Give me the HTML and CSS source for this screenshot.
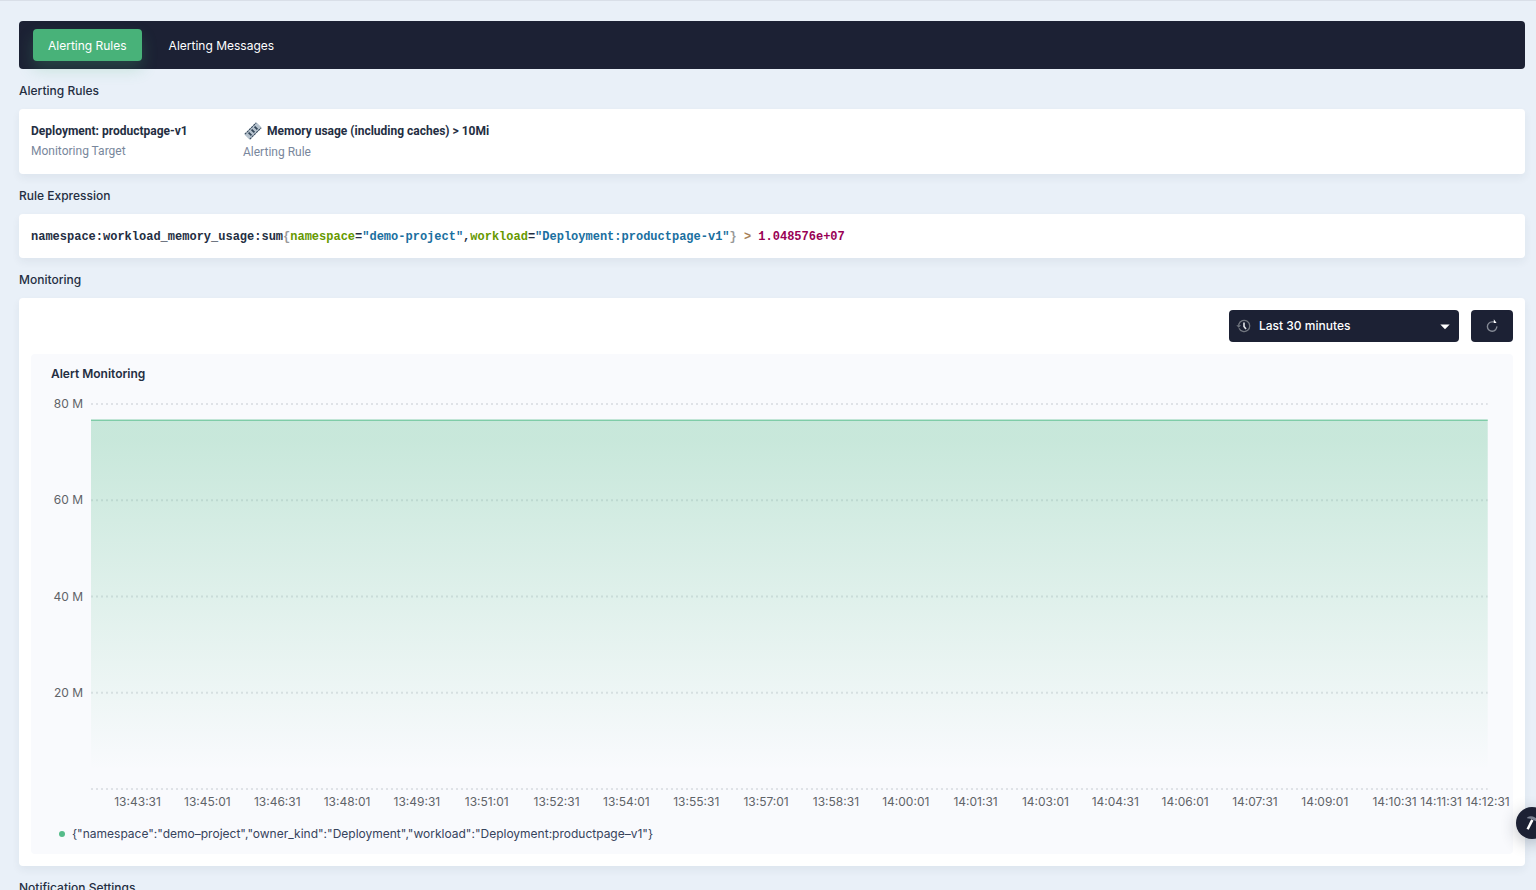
FILE: index.html
```html
<!DOCTYPE html>
<html lang="en">
<head>
<meta charset="utf-8">
<title>Alerting Rules</title>
<link rel="stylesheet" href="styles.css">
</head>
<body>
<main class="page">
  <nav class="tabs" aria-label="Alerting">
    <button class="tab tab-active" type="button">Alerting Rules</button>
    <button class="tab" type="button">Alerting Messages</button>
  </nav>

  <h2 class="section-title">Alerting Rules</h2>
  <section class="card rule-card">
    <div class="rule-item">
      <strong class="rule-value">Deployment: productpage-v1</strong>
      <span class="rule-label">Monitoring Target</span>
    </div>
    <div class="rule-item">
      <strong class="rule-value rule-metric">
        <svg class="metric-icon" width="20" height="20" viewBox="0 0 20 20" aria-hidden="true">
          <g transform="rotate(-45 10 10)">
            <rect x="1.5" y="6" width="17" height="8" rx="1" fill="#b6c2cd"/>
            <path d="M2 6.5h16M2 13.5h16" stroke="#324558" stroke-width="1" stroke-dasharray="2.2 .8"/>
            <path d="M5.8 8v4M10 8v4M14.2 8v4" stroke="#324558" stroke-width="1.8"/>
          </g>
        </svg>
        <span>Memory usage (including caches) &gt; 10Mi</span>
      </strong>
      <span class="rule-label">Alerting Rule</span>
    </div>
  </section>

  <h2 class="section-title">Rule Expression</h2>
  <section class="card">
    <pre class="expression"><code>namespace:workload_memory_usage:sum<span class="tok-brace">{</span><span class="tok-label">namespace</span>=<span class="tok-string">"demo-project"</span>,<span class="tok-label">workload</span>=<span class="tok-string">"Deployment:productpage-v1"</span><span class="tok-brace">}</span> <span class="tok-operator">&gt;</span> <span class="tok-number">1.048576e+07</span></code></pre>
  </section>

  <h2 class="section-title">Monitoring</h2>
  <section class="card">
    <div class="toolbar">
      <div class="range">
        <svg class="range-clock" width="16" height="16" viewBox="0 0 16 16" fill="none" aria-hidden="true">
          <path d="M3 10.2A5.6 5.6 0 1 0 2.8 6.2V7.6" stroke="#71767f" stroke-width="1.3"/>
          <path d="M.3 7.2h4.8L2.7 9.8z" fill="#71767f"/>
          <path d="M8 4.6v3.8l2 2.6" stroke="#e3e5e9" stroke-width="1.6"/>
        </svg>
        <select class="range-select" aria-label="Time range">
          <option>Last 30 minutes</option>
          <option>Last 1 hour</option>
        </select>
        <svg class="range-caret" width="10" height="6" viewBox="0 0 10 6" aria-hidden="true"><path d="M.3.4h9.4L5 5.3z" fill="#fff"/></svg>
      </div>
      <button class="refresh" type="button" aria-label="Refresh">
        <svg width="16" height="16" viewBox="0 0 16 16" fill="none" aria-hidden="true">
          <path d="M10.6 3.9H8A4.7 4.7 0 1 0 12.8 8.4" stroke="#858a95" stroke-width="1.4"/>
          <path d="M9.8 1.2l2.8 3.7H9.8z" fill="#fff"/>
        </svg>
      </button>
    </div>

    <div class="panel">
      <h3 class="panel-title">Alert Monitoring</h3>
      <div class="chart">
        <div class="y-axis"><span>80 M</span><span>60 M</span><span>40 M</span><span>20 M</span></div>
        <div class="canvas">
          <svg class="plot" aria-label="Memory usage over the last 30 minutes" role="img">
            <defs>
              <linearGradient id="area-fill" x1="0" y1="0" x2="0" y2="1">
                <stop offset="5%" stop-color="#55bc8a" stop-opacity=".3"/>
                <stop offset="95%" stop-color="#55bc8a" stop-opacity="0"/>
              </linearGradient>
            </defs>
            <g class="grid-lines">
              <line x1="0" x2="100%" y1="0" y2="0"/>
              <line x1="0" x2="100%" y1="25%" y2="25%"/>
              <line x1="0" x2="100%" y1="50%" y2="50%"/>
              <line x1="0" x2="100%" y1="75%" y2="75%"/>
              <line x1="0" x2="100%" y1="100%" y2="100%"/>
            </g>
            <rect x="0" y="4.2%" width="100%" height="95.8%" fill="url(#area-fill)"/>
            <line class="series-line" x1="0" x2="100%" y1="4.2%" y2="4.2%"/>
          </svg>
          <div class="x-axis">
            <span style="grid-column:2/4">13:43:31</span>
            <span style="grid-column:5/7">13:45:01</span>
            <span style="grid-column:8/10">13:46:31</span>
            <span style="grid-column:11/13">13:48:01</span>
            <span style="grid-column:14/16">13:49:31</span>
            <span style="grid-column:17/19">13:51:01</span>
            <span style="grid-column:20/22">13:52:31</span>
            <span style="grid-column:23/25">13:54:01</span>
            <span style="grid-column:26/28">13:55:31</span>
            <span style="grid-column:29/31">13:57:01</span>
            <span style="grid-column:32/34">13:58:31</span>
            <span style="grid-column:35/37">14:00:01</span>
            <span style="grid-column:38/40">14:01:31</span>
            <span style="grid-column:41/43">14:03:01</span>
            <span style="grid-column:44/46">14:04:31</span>
            <span style="grid-column:47/49">14:06:01</span>
            <span style="grid-column:50/52">14:07:31</span>
            <span style="grid-column:53/55">14:09:01</span>
            <span style="grid-column:56/58">14:10:31</span>
            <span style="grid-column:58/60">14:11:31</span>
            <span style="grid-column:60/62">14:12:31</span>
          </div>
        </div>
      </div>
      <div class="legend"><i class="legend-dot"></i><span>{"namespace":"demo–project","owner_kind":"Deployment","workload":"Deployment:productpage–v1"}</span></div>
    </div>
  </section>

  <h2 class="section-title">Notification Settings</h2>
</main>
<button class="toolbox" type="button" aria-label="Toolbox">
  <svg width="20" height="20" viewBox="0 0 20 20" aria-hidden="true">
    <path d="M9.2 6.2l2.3 1.2L6.7 16.8l-2.2-1.1z" fill="#fff"/>
    <path d="M5.3 4.2c2.6-1.5 5.4-1.2 7.7.3l3 2-1.3 2.2-3-1.6-3.2-1.4-3.4-.5z" fill="#7b8292"/>
  </svg>
</button>
</body>
</html>
```
FILE: styles.css
```css
* {
  box-sizing: border-box;
}

body {
  margin: 0;
  height: 100vh;
  overflow: hidden;
  background: #e9f0f8;
  color: #242e42;
  font: 12px/20px Inter, "Liberation Sans", sans-serif;
}

button,
select {
  font: inherit;
  border: 0;
  cursor: pointer;
}

.page {
  padding: 20px 11px 0 19px;
  border-top: 1px solid #d9dfe8;
}

.tabs {
  display: flex;
  gap: 12px;
  padding: 8px 14px;
  border-radius: 4px;
  background: #1c2134;
}

.tab {
  height: 32px;
  padding: 2px 15px 0;
  border-radius: 4px;
  background: transparent;
  color: #fff;
}

.tab-active {
  background: #48b279;
  box-shadow: 0 8px 16px rgba(72, 178, 121, .24);
}

.section-title {
  margin: 12px 0 8px;
  font-size: 12px;
  font-weight: 500;
  line-height: 20px;
}

.card {
  padding: 12px;
  border-radius: 4px;
  background: #fff;
  box-shadow: 0 4px 8px rgba(36, 46, 66, .06);
}

.rule-card {
  display: grid;
  grid-template-columns: 212px minmax(0, 1fr);
  font-family: Roboto, sans-serif;
}

.rule-item {
  display: flex;
  flex-direction: column;
  min-height: 41px;
}

.rule-value {
  font-weight: 700;
}

.rule-metric {
  display: flex;
  gap: 4px;
  min-height: 21px;
}

.rule-label {
  color: #79879c;
}

.expression {
  margin: 0;
  padding-top: 2px;
  color: #242e42;
  font: 700 12px/18px "Liberation Mono", monospace;
  white-space: pre-wrap;
}

.expression code {
  font: inherit;
}

.tok-brace { color: #999; }
.tok-label { color: #690; }
.tok-string { color: #1a6fa0; }
.tok-operator { color: #a67f59; }
.tok-number { color: #905; }

.toolbar {
  display: flex;
  justify-content: flex-end;
  gap: 12px;
  margin-bottom: 12px;
}

.range {
  position: relative;
  width: 230px;
}

.range-select {
  display: block;
  width: 100%;
  height: 32px;
  padding: 0 30px;
  border-radius: 4px;
  background: #1c2134;
  color: #fff;
  font-weight: 500;
  appearance: none;
}

.range-clock,
.range-caret {
  position: absolute;
  pointer-events: none;
}

.range-clock {
  left: 7px;
  top: 8px;
}

.range-caret {
  right: 9px;
  top: 14px;
}

.refresh {
  display: grid;
  place-items: center;
  width: 42px;
  height: 32px;
  padding: 0;
  border-radius: 4px;
  background: #1c2134;
}

.panel {
  padding: 10px 0 10px 20px;
  border-radius: 4px;
  background: #f9fafd;
}

.panel-title {
  margin: 0 0 20px;
  font-size: 12px;
  font-weight: 600;
  line-height: 20px;
}

.chart {
  display: grid;
  grid-template-columns: 40px minmax(0, 1fr);
  padding-right: 2px;
  color: #5f6368;
}

.y-axis {
  display: grid;
  grid-template-rows: repeat(4, 1fr);
  height: 385px;
  padding-right: 8px;
  text-align: right;
}

.y-axis span {
  margin-top: -10px;
}

.canvas,
.x-axis {
  display: grid;
  grid-template-columns: repeat(61, minmax(0, 1fr));
}

.plot {
  grid-column: 1 / 61;
  width: 100%;
  height: 385px;
  overflow: visible;
}

.grid-lines line {
  stroke: #dfe2e7;
  stroke-width: 2px;
  stroke-dasharray: 2 3;
}

.series-line {
  stroke: #55bc8a;
  stroke-width: 1px;
}

.x-axis {
  grid-column: 1 / -1;
  padding-top: 3px;
}

.x-axis span {
  display: flex;
  justify-content: center;
  grid-row: 1;
  white-space: nowrap;
}

.legend {
  display: flex;
  align-items: center;
  gap: 7px;
  margin-top: 12px;
  padding-left: 8px;
  color: #36435c;
}

.legend-dot {
  width: 6px;
  height: 6px;
  border-radius: 50%;
  background: #55bc8a;
}

.toolbox {
  position: fixed;
  right: -12px;
  bottom: 51px;
  display: grid;
  place-items: center;
  width: 32px;
  height: 32px;
  padding: 0;
  border-radius: 50%;
  background: #1c2134;
  box-shadow: 0 4px 16px rgba(36, 46, 66, .3);
}
```
